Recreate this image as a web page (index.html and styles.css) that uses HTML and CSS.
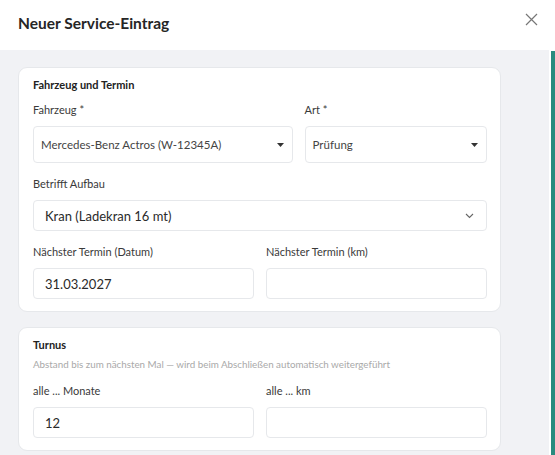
FILE: index.html
```html
<!DOCTYPE html>
<html lang="de">
<head>
    <meta charset="UTF-8">
    <meta name="viewport" content="width=device-width, initial-scale=1.0">
    <title>Neuer Service-Eintrag</title>
    <link rel="stylesheet" href="styles.css">
</head>
<body>
    <div class="modal">
        <div class="modal-header">
            <h2>Neuer Service-Eintrag</h2>
            <button class="close-btn" aria-label="Schließen">
                <svg width="13" height="13" viewBox="0 0 13 13">
                    <path d="M1 1 L12 12 M12 1 L1 12" stroke="#777" stroke-width="1.2" fill="none"/>
                </svg>
            </button>
        </div>
        <div class="modal-body">
            <div class="modal-content">
                <section class="card">
                    <h3>Fahrzeug und Termin</h3>
                    <div class="row row-wide">
                        <div class="field">
                            <label>Fahrzeug *</label>
                            <div class="select tall">
                                <span>Mercedes-Benz Actros (W-12345A)</span>
                                <svg class="caret" width="7" height="4" viewBox="0 0 7 4"><path d="M0 0 H7 L3.5 4 Z" fill="#333"/></svg>
                            </div>
                        </div>
                        <div class="field">
                            <label>Art *</label>
                            <div class="select tall">
                                <span>Prüfung</span>
                                <svg class="caret" width="7" height="4" viewBox="0 0 7 4"><path d="M0 0 H7 L3.5 4 Z" fill="#333"/></svg>
                            </div>
                        </div>
                    </div>
                    <div class="field">
                        <label>Betrifft Aufbau</label>
                        <div class="select big">
                            <span>Kran (Ladekran 16 mt)</span>
                            <svg class="chevron" width="9" height="6" viewBox="0 0 9 6"><path d="M1 1 L4.5 4.5 L8 1" stroke="#666" stroke-width="1.1" fill="none"/></svg>
                        </div>
                    </div>
                    <div class="row">
                        <div class="field">
                            <label>Nächster Termin (Datum)</label>
                            <div class="input">31.03.2027</div>
                        </div>
                        <div class="field">
                            <label>Nächster Termin (km)</label>
                            <div class="input"></div>
                        </div>
                    </div>
                </section>
                <section class="card">
                    <h3>Turnus</h3>
                    <p class="hint">Abstand bis zum nächsten Mal — wird beim Abschließen automatisch weitergeführt</p>
                    <div class="row">
                        <div class="field">
                            <label>alle ... Monate</label>
                            <div class="input">12</div>
                        </div>
                        <div class="field">
                            <label>alle ... km</label>
                            <div class="input"></div>
                        </div>
                    </div>
                </section>
            </div>
            <div class="scroll-bar"></div>
        </div>
    </div>
</body>
</html>
```

FILE: styles.css
```css
:root {
    --text-color: #2d2d2d;
    --label-color: #3a3a3a;
    --muted: #a9a9a9;
    --body-bg: #f1f2f5;
    --border: #e6e8eb;
    --accent: #2a8b7f;
}

* {
    box-sizing: border-box;
}

body {
    margin: 0;
    font-family: "Lato", "Noto Sans", sans-serif;
    color: var(--text-color);
    background: #fff;
}

.modal {
    width: 555px;
    height: 455px;
    overflow: hidden;
}

.modal-header {
    height: 50px;
    display: flex;
    align-items: center;
    justify-content: space-between;
    padding: 0 17px 4px 18px;
    background: #fff;
}
.modal-header h2 {
    margin: 0;
    font-size: 15.5px;
    font-weight: 700;
    color: #262626;
}
.close-btn {
    border: none;
    background: none;
    padding: 0;
    margin-bottom: 8px;
    display: flex;
    cursor: pointer;
}

.modal-body {
    display: grid;
    grid-template-columns: 1fr 4px;
    column-gap: 2px;
    height: 405px;
}
.modal-content {
    background: var(--body-bg);
    padding: 17px 48px 0 18px;
    display: flex;
    flex-direction: column;
    gap: 15px;
}
.scroll-bar {
    background: var(--accent);
    margin-top: 1px;
}

.card {
    background: #fff;
    border: 1px solid var(--border);
    border-radius: 9px;
    padding: 10px 13px 12px 14px;
}
.card h3 {
    margin: 0 0 11px;
    font-size: 11px;
    line-height: 14px;
    font-weight: 700;
    color: #222;
}
.hint {
    margin: -5px 0 14px;
    font-size: 9.8px;
    line-height: 12px;
    color: var(--muted);
}

.row {
    display: grid;
    grid-template-columns: 1fr 1fr;
    column-gap: 12px;
}
.row-wide {
    grid-template-columns: 259fr 182fr;
}
.card > .row + .field,
.card > .field + .row {
    margin-top: 14px;
}

label {
    display: block;
    font-size: 11px;
    line-height: 14px;
    color: var(--label-color);
    margin-bottom: 9px;
}

.select,
.input {
    position: relative;
    display: flex;
    align-items: center;
    border: 1px solid var(--border);
    border-radius: 4px;
    background: #fff;
    height: 31px;
    padding: 0 11px;
    font-size: 13px;
    color: #2a2a2a;
}
.select.tall {
    height: 37px;
    padding-left: 7px;
    font-size: 11.5px;
    color: #444;
}
.caret {
    position: absolute;
    right: 8px;
    top: 16px;
}
.chevron {
    position: absolute;
    right: 12px;
    top: 12px;
}
```
